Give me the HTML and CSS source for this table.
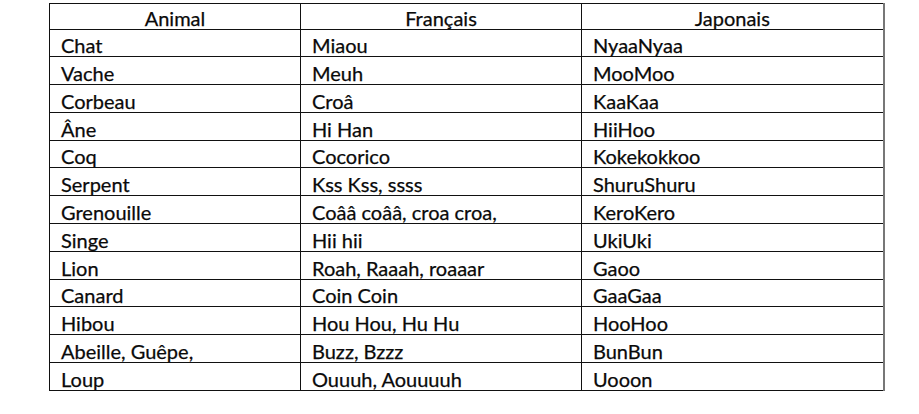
FILE: index.html
```html
<!DOCTYPE html>
<html lang="fr">
<head>
<meta charset="utf-8">
<link rel="stylesheet" href="styles.css">
</head>
<body>
<table class="cris">
  <colgroup>
    <col class="c1"><col class="c2"><col class="c3">
  </colgroup>
  <thead>
    <tr><th>Animal</th><th>Français</th><th>Japonais</th></tr>
  </thead>
  <tbody>
    <tr><td>Chat</td><td>Miaou</td><td>NyaaNyaa</td></tr>
    <tr><td>Vache</td><td>Meuh</td><td>MooMoo</td></tr>
    <tr><td>Corbeau</td><td>Croâ</td><td>KaaKaa</td></tr>
    <tr><td>Âne</td><td>Hi Han</td><td>HiiHoo</td></tr>
    <tr><td>Coq</td><td>Cocorico</td><td>Kokekokkoo</td></tr>
    <tr><td>Serpent</td><td>Kss Kss, ssss</td><td>ShuruShuru</td></tr>
    <tr><td>Grenouille</td><td>Coââ coââ, croa croa,</td><td>KeroKero</td></tr>
    <tr><td>Singe</td><td>Hii hii</td><td>UkiUki</td></tr>
    <tr><td>Lion</td><td>Roah, Raaah, roaaar</td><td>Gaoo</td></tr>
    <tr><td>Canard</td><td>Coin Coin</td><td>GaaGaa</td></tr>
    <tr><td>Hibou</td><td>Hou Hou, Hu Hu</td><td>HooHoo</td></tr>
    <tr><td>Abeille, Guêpe,</td><td>Buzz, Bzzz</td><td>BunBun</td></tr>
    <tr><td>Loup</td><td>Ouuuh, Aouuuuh</td><td>Uooon</td></tr>
  </tbody>
</table>
</body>
</html>
```

FILE: styles.css
```css
html, body {
  margin: 0;
  background: #ffffff;
}
body {
  padding: 3px 0 0 49px;
  font-family: Lato, "Liberation Sans", sans-serif;
  color: #0a0a0a;
}
.cris {
  border-collapse: collapse;
  width: 834px;
  table-layout: fixed;
  font-size: 20px;
  -webkit-text-stroke: 0.25px #0a0a0a;
}
.c1 { width: 251px; }
.c2 { width: 281px; }
.c3 { width: 302px; }
.cris th, .cris td {
  border: 1px solid #111111;
  padding: 0 11px;
  height: 26.8px;
  line-height: 22px;
  vertical-align: bottom;
  text-align: left;
  font-weight: normal;
  white-space: nowrap;
}
.cris thead th {
  text-align: center;
  height: 24.5px;
}
.cris th:last-child, .cris td:last-child {
  border-right: 2px solid #777777;
}
```
